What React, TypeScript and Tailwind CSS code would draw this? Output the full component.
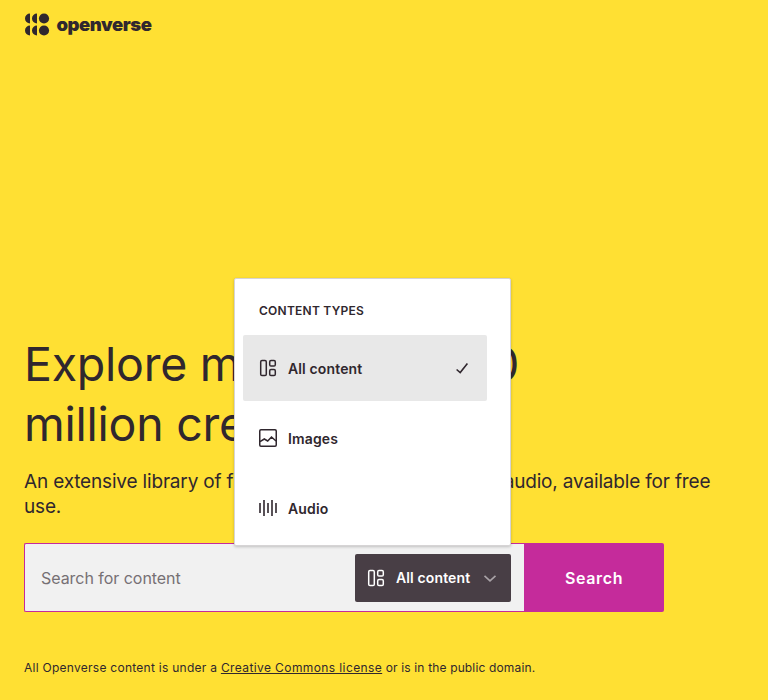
import React from 'react';

function LayoutIcon() {
  return (
    <svg width="18" height="18" viewBox="0 0 18 18" fill="none" stroke="currentColor" strokeWidth="1.5">
      <rect x="1.7" y="1.6" width="5.6" height="14.9" rx="1.3" />
      <rect x="10.7" y="1.6" width="5.6" height="5.4" rx="1.3" />
      <rect x="10.7" y="10.6" width="5.6" height="5.9" rx="1.3" />
    </svg>
  );
}

function ImageIcon() {
  return (
    <svg width="18" height="18" viewBox="0 0 18 18" fill="none" stroke="currentColor" strokeWidth="1.5">
      <rect x=".75" y=".75" width="16.5" height="16.5" rx="1.2" />
      <path d="m1 12.7 4.3-2.7 3.4 2L12.5 8l4.5 4" />
    </svg>
  );
}

function AudioIcon() {
  return (
    <svg width="18" height="18" viewBox="0 0 18 18" fill="none" stroke="currentColor" strokeWidth="1.6">
      <path d="M1 4v10M5 1v16M9 4v10M13 1v16M17 4v10" />
    </svg>
  );
}

function Logo() {
  return (
    <div className="flex h-6 items-center">
      <svg width="26" height="24" viewBox="0 0 26 24" fill="currentColor">
        <path d="M6 1.5v10a5 5 0 0 1 0-10ZM13 1.5v10a5 5 0 0 1 0-10ZM6 13.5v10a5 5 0 0 1 0-10ZM13 13.5v10a5 5 0 0 1 0-10Z" />
        <circle cx="20" cy="6.5" r="5.1" />
        <circle cx="20" cy="18.5" r="5.1" />
      </svg>
      <span className="ml-[6.5px] text-[18.5px] leading-[22px] font-black tracking-[-0.45px]">openverse</span>
    </div>
  );
}

const types = [
  { label: 'All content', icon: <LayoutIcon />, selected: true },
  { label: 'Images', icon: <ImageIcon />, selected: false },
  { label: 'Audio', icon: <AudioIcon />, selected: false },
];

function ContentMenu() {
  return (
    <div className="absolute right-0 bottom-[56px] h-[268px] w-[277px] rounded-[2px] border border-[#d6d4d5] bg-white pt-6 pr-[23px] pl-2 text-[#30272e] shadow-[0_1px_3px_rgba(0,0,0,0.2)]">
      <h2 className="pl-4 text-[12px] leading-4 font-semibold tracking-[0.24px]">CONTENT TYPES</h2>
      <ul className="mt-4 flex flex-col gap-1">
        {types.map((t) => (
          <li key={t.label} className={t.selected ? 'flex h-[66px] items-center rounded-[2px] bg-[#e8e8e8] px-4' : 'flex h-[66px] items-center px-4'}>
            {t.icon}
            <span className="ml-[11px] flex-1 pt-px text-[14px] font-semibold tracking-[0.13px]">{t.label}</span>
            {t.selected && (
              <svg width="18" height="18" viewBox="0 0 18 18" fill="none" stroke="currentColor" strokeWidth="1.6">
                <path d="m3.6 10.5 3.6 3 7.2-8.9" />
              </svg>
            )}
          </li>
        ))}
      </ul>
    </div>
  );
}

export default function App() {
  return (
    <div className="h-[700px] w-[768px] overflow-hidden bg-[#ffe033] px-6 font-['Inter',sans-serif] text-[#30272e]">
      <header className="h-[334px] pt-3"><Logo /></header>
      <h1 className="text-[46.5px] leading-[60px] tracking-[-0.25px]">Explore more than 800<br />million creative works</h1>
      <p className="mt-[15px] text-[19px] leading-[25px] tracking-[-0.17px]">An extensive library of free stock photos, images, and audio, available for free use.</p>
      <div className="mt-6 flex h-[69px] w-[640px]">
        <div className="flex flex-1 items-center rounded-l-[2px] border border-r-0 border-[#c52b9b] bg-[#f1f1f1] pr-[13px] pl-4">
          <span className="flex-1 pt-px text-[16px] tracking-[-0.04px] text-[#767074]">Search for content</span>
          <div className="relative">
            <button className="flex h-12 w-[156px] items-center rounded-[2px] bg-[#483e45] px-3 text-white">
              <LayoutIcon />
              <span className="ml-[11px] text-[14px] font-semibold tracking-[0.12px]">All content</span>
              <svg className="ml-[13px] text-[#a9a3a7]" width="14" height="14" viewBox="0 0 14 14" fill="none" stroke="currentColor" strokeWidth="1.6">
                <path d="m1.5 4.8 5.5 5 5.5-5" />
              </svg>
            </button>
            <ContentMenu />
          </div>
        </div>
        <button className="w-[140px] rounded-r-[2px] bg-[#c52b9b] pt-px text-[16px] font-semibold tracking-[0.65px] text-white">Search</button>
      </div>
      <p className="mt-12 text-[12px] leading-4 tracking-[0.265px]">All Openverse content is under a <span className="tracking-[0.4px] underline">Creative Commons license</span><span className="tracking-[0.15px]"> or is in the public domain.</span></p>
    </div>
  );
}
